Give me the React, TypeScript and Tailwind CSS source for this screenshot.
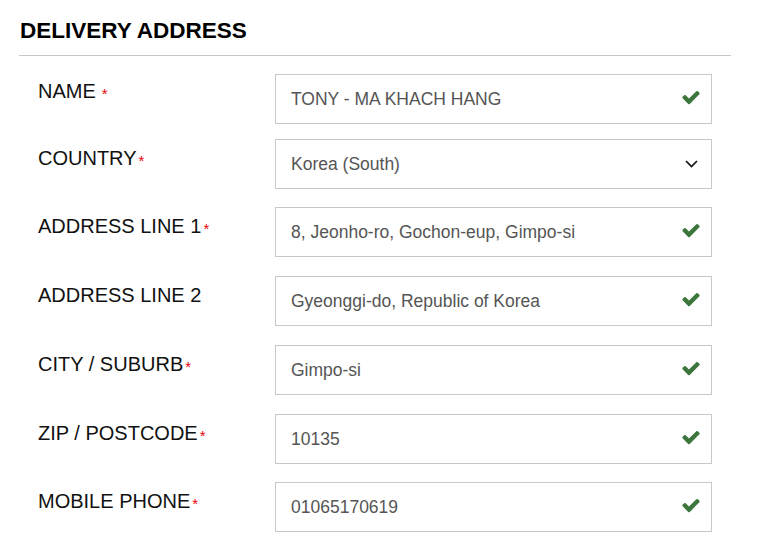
import React from 'react';

const fields = [
  { label: 'NAME', required: true, space: true, value: 'TONY - MA KHACH HANG', mt: 'mt-[18px]', lp: 'pt-[6px]' },
  { label: 'COUNTRY', required: true, value: 'Korea (South)', select: true, mt: 'mt-[15px]', lp: 'pt-[8px]' },
  { label: 'ADDRESS LINE 1', required: true, value: '8, Jeonho-ro, Gochon-eup, Gimpo-si', mt: 'mt-[18px]', lp: 'pt-[8px]' },
  { label: 'ADDRESS LINE 2', required: false, value: 'Gyeonggi-do, Republic of Korea', mt: 'mt-[19px]', lp: 'pt-[8px]' },
  { label: 'CITY / SUBURB', required: true, value: 'Gimpo-si', mt: 'mt-[19px]', lp: 'pt-[8px]' },
  { label: 'ZIP / POSTCODE', required: true, value: '10135', mt: 'mt-[19px]', lp: 'pt-[8px]' },
  { label: 'MOBILE PHONE', required: true, value: '01065170619', mt: 'mt-[18px]', lp: 'pt-[8px]' },
];

function Check() {
  return (
    <svg className="mb-[4px] h-[15px] w-[20px] text-[#3c763d]" viewBox="0 0 1792 1340" preserveAspectRatio="none" fill="currentColor">
      <path d="M1671 566q0 40-28 68l-724 724-136 136q-28 28-68 28t-68-28l-136-136-362-362q-28-28-28-68t28-68l136-136q28-28 68-28t68 28l294 295 656-657q28-28 68-28t68 28l136 136q28 28 28 68z" transform="translate(0 -250)" />
    </svg>
  );
}

function Chevron() {
  return (
    <svg className="h-[8px] w-[13px]" viewBox="0 0 13 8" fill="none" stroke="#111" strokeWidth={1.7}>
      <polyline points="1,1 6.5,6.5 12,1" />
    </svg>
  );
}

export default function App() {
  return (
    <div className="min-h-[550px] w-[757px] bg-white px-[19px] pt-[18px] font-['Liberation_Sans',Arial,sans-serif]">
      {/* ─── Header ─── */}
      <h2 className="pl-[1px] text-[22.5px] font-bold leading-[26px] text-black">DELIVERY ADDRESS</h2>
      <div className="mt-[11px] h-px w-[712px] bg-[#c8c8c8]" />

      {/* ─── Fields ─── */}
      {fields.map((f) => (
        <div key={f.label} className={`flex ${f.mt}`}>
          <div className={`w-[256px] pl-[19px] text-[20px] leading-[23px] text-[#111] ${f.lp}`}>
            {f.label}
            {f.required && (
              <span className={`relative top-[1px] text-[15px] text-[#e8000b] ${f.space ? 'ml-[6px]' : 'ml-[2px]'}`}>*</span>
            )}
          </div>
          <div className="flex h-[50px] w-[437px] items-center justify-between border border-[#c8c8c8] pl-[15px] pr-[10px] text-[17.5px] text-[#555]">
            <span>{f.value}</span>
            {f.select ? (
              <span className="pr-[3px]">
                <Chevron />
              </span>
            ) : (
              <Check />
            )}
          </div>
        </div>
      ))}
    </div>
  );
}
